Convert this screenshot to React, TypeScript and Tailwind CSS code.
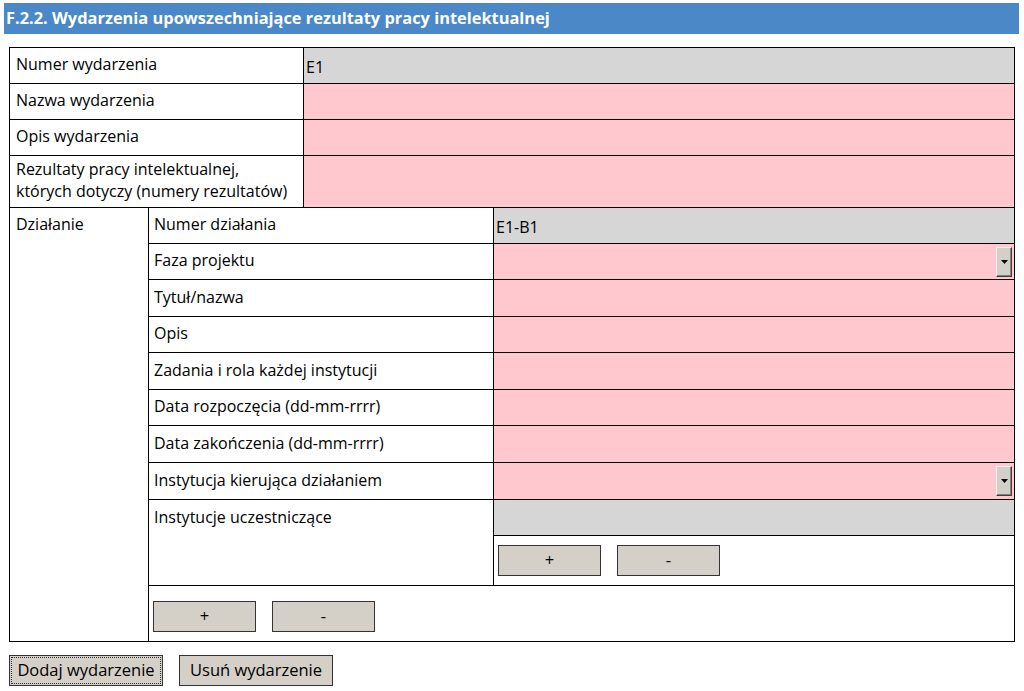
import React from "react";

const font = { fontFamily: "'Open Sans', 'Liberation Sans', sans-serif" };

function Select() {
  return (
    <div className="flex-1 bg-[#ffc7ce] flex justify-end items-center pr-[2px]">
      <div className="w-[16px] h-[30px] bg-[#d4d0c8] border border-[#404040] border-t-[#f0f0f0] border-l-[#f0f0f0] shadow-[inset_-1px_-1px_0_#808080] flex items-center justify-center">
        <svg width="7" height="4" viewBox="0 0 7 4"><path d="M0 0h7L3.5 4z" fill="#000" /></svg>
      </div>
    </div>
  );
}

function Btn({ children, w = "w-[103px]", focus = false }: { children: React.ReactNode; w?: string; focus?: boolean }) {
  return (
    <div className={`${w} h-[31px] bg-[#d4d0c8] border border-[#333] flex items-center justify-center text-[16.5px] text-black relative`}>
      {focus && <div className="absolute inset-[1px] border border-dotted border-[#333]" />}
      <span className="relative">{children}</span>
    </div>
  );
}

export default function App() {
  const inner: { label: string; h: string; kind: "grey" | "pink" | "select"; value?: string }[] = [
    { label: "Numer działania", h: "h-[36px]", kind: "grey", value: "E1-B1" },
    { label: "Faza projektu", h: "h-[36px]", kind: "select" },
    { label: "Tytuł/nazwa", h: "h-[37px]", kind: "pink" },
    { label: "Opis", h: "h-[36px]", kind: "pink" },
    { label: "Zadania i rola każdej instytucji", h: "h-[37px]", kind: "pink" },
    { label: "Data rozpoczęcia (dd-mm-rrrr)", h: "h-[36px]", kind: "pink" },
    { label: "Data zakończenia (dd-mm-rrrr)", h: "h-[37px]", kind: "pink" },
    { label: "Instytucja kierująca działaniem", h: "h-[37px]", kind: "select" },
  ];
  return (
    <div className="w-[1024px] h-[691px] bg-white text-black overflow-hidden" style={font}>
      <div className="ml-[4px] mt-[3px] w-[1015px] h-[31px] bg-[#4a88c8] text-white font-bold text-[16.4px] flex items-center pl-[2px]">
        F.2.2. Wydarzenia upowszechniające rezultaty pracy intelektualnej
      </div>
      <div className="ml-[9px] mt-[13px] w-[1006px] border border-black text-[16px]">
        {[
          { label: "Numer wydarzenia", h: "h-[36px]", grey: true, value: "E1" },
          { label: "Nazwa wydarzenia", h: "h-[36px]" },
          { label: "Opis wydarzenia", h: "h-[36px]" },
        ].map((r) => (
          <div key={r.label} className={`flex ${r.h} border-b border-black`}>
            <div className="w-[294px] border-r border-black pl-[6px] flex items-center pb-[3px]">{r.label}</div>
            {r.grey ? (
              <div className="flex-1 bg-[#d6d6d6] pl-[2px] flex items-center pt-[3px]">{r.value}</div>
            ) : (
              <div className="flex-1 bg-[#ffc7ce]" />
            )}
          </div>
        ))}
        <div className="flex h-[52px] border-b border-black">
          <div className="w-[294px] border-r border-black pl-[6px] flex flex-col justify-center leading-[22px] pb-[3px]">
            <span>Rezultaty pracy intelektualnej,</span>
            <span>których dotyczy (numery rezultatów)</span>
          </div>
          <div className="flex-1 bg-[#ffc7ce]" />
        </div>
        <div className="flex">
          <div className="w-[139px] border-r border-black pl-[6px] pt-[4px]">Działanie</div>
          <div className="flex-1 flex flex-col">
            {inner.map((r) => (
              <div key={r.label} className={`flex ${r.h} border-b border-black`}>
                <div className="w-[345px] border-r border-black pl-[5px] flex items-center pb-[3px]">{r.label}</div>
                {r.kind === "grey" && <div className="flex-1 bg-[#d6d6d6] pl-[2px] flex items-center pt-[3px]">{r.value}</div>}
                {r.kind === "pink" && <div className="flex-1 bg-[#ffc7ce]" />}
                {r.kind === "select" && <Select />}
              </div>
            ))}
            <div className="flex h-[86px] border-b border-black">
              <div className="w-[345px] border-r border-black pl-[5px] pt-[5px]">Instytucje uczestniczące</div>
              <div className="flex-1 flex flex-col">
                <div className="h-[36px] bg-[#d6d6d6] border-b border-black" />
                <div className="flex gap-[16px] pl-[4px] pt-[9px]">
                  <Btn>+</Btn>
                  <Btn>-</Btn>
                </div>
              </div>
            </div>
            <div className="h-[55px] flex gap-[16px] pl-[4px] pt-[15px]">
              <Btn>+</Btn>
              <Btn>-</Btn>
            </div>
          </div>
        </div>
      </div>
      <div className="ml-[9px] mt-[13px] flex gap-[16px]">
        <Btn w="w-[154px]" focus>Dodaj wydarzenie</Btn>
        <Btn w="w-[154px]">Usuń wydarzenie</Btn>
      </div>
    </div>
  );
}
